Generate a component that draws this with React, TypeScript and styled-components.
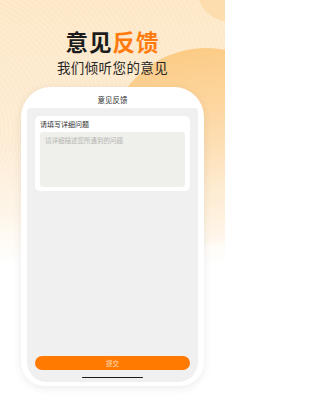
import styled, { createGlobalStyle } from "styled-components";

const GlobalStyle = createGlobalStyle`
    html, body {
        margin: 0;
        padding: 0;
        background: #ffffff;
        font-family: "Noto Sans CJK SC", "Noto Sans", sans-serif;
    }
`;

const Page = styled.div`
    position: relative;
    width: 225px;
    height: 400px;
    overflow: hidden;
    display: flex;
    flex-direction: column;
    align-items: center;
    background:
        radial-gradient(circle at 230px -12px, #fddcae 0, #fddcae 33px, rgba(253, 220, 174, 0) 34px),
        repeating-radial-gradient(circle at -60px 130px, rgba(255, 255, 255, 0) 0, rgba(255, 255, 255, 0) 3px, rgba(255, 255, 255, 0.35) 3.6px, rgba(255, 255, 255, 0) 4.2px),
        linear-gradient(180deg, #fde7c6 0%, #fdebd2 35%, #fef4e6 52%, #ffffff 66%);

    /* big soft circle behind the phone */
    &::before {
        content: "";
        position: absolute;
        left: 108px;
        top: 48px;
        width: 196px;
        height: 196px;
        border-radius: 50%;
        background: linear-gradient(170deg, #fcc97f 0%, #fdd7a2 35%, rgba(254, 232, 200, 0.6) 70%, rgba(255, 255, 255, 0) 100%);
    }
`;

const Hero = styled.div`
    position: relative;
    padding-top: 27px;
    display: flex;
    flex-direction: column;
    align-items: center;
`;

const Title = styled.h1`
    margin: 0;
    font-size: 22.5px;
    line-height: 28px;
    font-weight: 700;
    color: #1c1c1c;
    letter-spacing: 1px;
`;

const Accent = styled.span`
    color: #ff7a0c;
`;

const Subtitle = styled.div`
    margin-top: 3px;
    font-size: 13.5px;
    line-height: 18px;
    color: #262626;
    font-weight: 400;
    letter-spacing: 0.4px;
`;

const Phone = styled.div`
    position: relative;
    margin-top: 11px;
    width: 183px;
    height: 299px;
    box-sizing: border-box;
    background: #ffffff;
    border-radius: 30px 30px 24px 24px;
    padding: 0 6px 4px;
    display: flex;
    flex-direction: column;
    box-shadow: 0 2px 10px rgba(0, 0, 0, 0.08);
`;

const PhoneHeader = styled.div`
    height: 21px;
    display: flex;
    align-items: flex-end;
    justify-content: center;
    padding-bottom: 3px;
    box-sizing: border-box;
    font-size: 7.5px;
    line-height: 10px;
    color: #333333;
`;

const Screen = styled.div`
    flex: 1;
    background: #f0f0f0;
    border-radius: 3px 3px 20px 20px;
    padding: 8px 8px 4px;
    display: flex;
    flex-direction: column;
`;

const Card = styled.div`
    background: #ffffff;
    border-radius: 5px;
    padding: 3px 5px 4px;
`;

const Label = styled.div`
    font-size: 7px;
    line-height: 10px;
    color: #333333;
    margin-bottom: 3px;
`;

const TextArea = styled.div`
    height: 55px;
    background: #efefeb;
    border-radius: 3px;
    padding: 4px 5px;
    box-sizing: border-box;
    font-size: 6.5px;
    line-height: 9px;
    color: #b4b4b0;
`;

const Spacer = styled.div`
    flex: 1;
`;

const SubmitButton = styled.button`
    height: 14px;
    border: none;
    border-radius: 7px;
    background: #ff7a00;
    color: rgba(255, 255, 255, 0.75);
    font-family: inherit;
    font-size: 6.5px;
    line-height: 14px;
    padding: 0;
`;

const HomeBar = styled.div`
    align-self: center;
    margin-top: 7px;
    width: 61px;
    height: 1.5px;
    border-radius: 1px;
    background: #1a1a1a;
`;

const App = () => (
    <Page>
        <GlobalStyle />
        <Hero>
            <Title>
                意见<Accent>反馈</Accent>
            </Title>
            <Subtitle>我们倾听您的意见</Subtitle>
        </Hero>
        <Phone>
            <PhoneHeader>意见反馈</PhoneHeader>
            <Screen>
                <Card>
                    <Label>请填写详细问题</Label>
                    <TextArea>请详细描述您所遇到的问题</TextArea>
                </Card>
                <Spacer />
                <SubmitButton>提交</SubmitButton>
                <HomeBar />
            </Screen>
        </Phone>
    </Page>
);

export default App;
